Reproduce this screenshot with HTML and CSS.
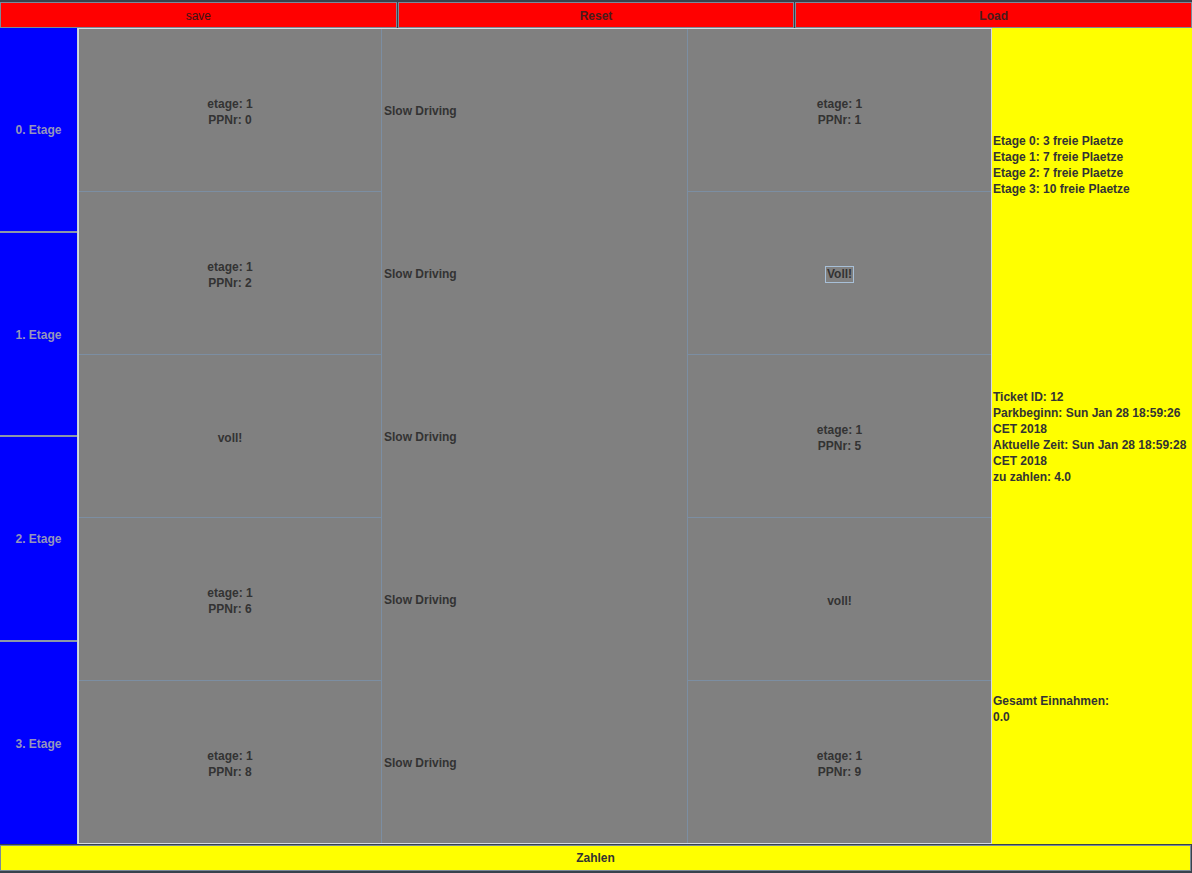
FILE: index.html
```html
<!DOCTYPE html>
<html>
<head>
<meta charset="utf-8">
<link rel="stylesheet" href="styles.css">
</head>
<body>
<div class="frame">
  <div class="topbar">
    <div class="tbtn light">save</div>
    <div class="tbtn">Reset</div>
    <div class="tbtn">Load</div>
  </div>
  <div class="main">
    <div class="floors">
      <div class="floor">0. Etage</div>
      <div class="floor">1. Etage</div>
      <div class="floor">2. Etage</div>
      <div class="floor">3. Etage</div>
    </div>
    <div class="lot">
      <div class="col col-left">
        <div class="cell"><span>etage: 1<br>PPNr: 0</span></div>
        <div class="cell"><span>etage: 1<br>PPNr: 2</span></div>
        <div class="cell"><span>voll!</span></div>
        <div class="cell"><span>etage: 1<br>PPNr: 6</span></div>
        <div class="cell"><span>etage: 1<br>PPNr: 8</span></div>
      </div>
      <div class="col col-mid">
        <div class="lane">Slow Driving</div>
        <div class="lane">Slow Driving</div>
        <div class="lane">Slow Driving</div>
        <div class="lane">Slow Driving</div>
        <div class="lane">Slow Driving</div>
      </div>
      <div class="col col-right">
        <div class="cell"><span>etage: 1<br>PPNr: 1</span></div>
        <div class="cell"><span class="voll">Voll!</span></div>
        <div class="cell"><span>etage: 1<br>PPNr: 5</span></div>
        <div class="cell"><span>voll!</span></div>
        <div class="cell"><span>etage: 1<br>PPNr: 9</span></div>
      </div>
    </div>
    <div class="info">
      <div class="info-sec">Etage 0: 3 freie Plaetze<br>Etage 1: 7 freie Plaetze<br>Etage 2: 7 freie Plaetze<br>Etage 3: 10 freie Plaetze</div>
      <div class="info-sec">Ticket ID: 12<br>Parkbeginn: Sun Jan 28 18:59:26<br>CET 2018<br>Aktuelle Zeit: Sun Jan 28 18:59:28<br>CET 2018<br>zu zahlen: 4.0</div>
      <div class="info-sec">Gesamt Einnahmen:<br>0.0</div>
    </div>
  </div>
  <div class="bottombar">
    <div class="zahlen">Zahlen</div>
  </div>
</div>
</body>
</html>
```

FILE: styles.css
```css
html, body {
  margin: 0;
  padding: 0;
}
body {
  background: #38424c;
  font-family: "Liberation Sans", Arial, sans-serif;
  font-size: 12px;
  font-weight: bold;
  color: #333333;
}
.frame {
  width: 1192px;
  height: 873px;
  padding-top: 2px;
  box-sizing: border-box;
  display: flex;
  flex-direction: column;
}
.topbar {
  display: flex;
  height: 26px;
  flex: none;
}
.tbtn {
  flex: 1;
  background: #ff0000;
  border: 1px solid #7a8a99;
  display: flex;
  align-items: center;
  justify-content: center;
  color: #4a1c1c;
  padding-top: 1px;
}
.tbtn + .tbtn {
  margin-left: 1px;
}
.tbtn.light {
  font-weight: normal;
  color: #3a1414;
}
.main {
  display: flex;
  height: 816px;
  flex: none;
}
.floors {
  width: 77px;
  display: flex;
  flex-direction: column;
  border-right: 1px solid #c8d0d8;
  background: #0000ff;
}
.floor {
  flex: 1;
  background: #0000ff;
  color: #9494bc;
  display: flex;
  align-items: center;
  justify-content: center;
  padding-top: 2px;
}
.floor + .floor {
  border-top: 2px solid #8c98a8;
}
.lot {
  width: 912px;
  border: 1px solid #d4dae0;
  background: #808080;
  display: flex;
}
.col {
  display: flex;
  flex-direction: column;
}
.col-left {
  width: 302px;
  flex: none;
}
.col-right {
  flex: 1;
}
.col-mid {
  width: 307px;
  flex: none;
  box-sizing: border-box;
  border-left: 1px solid #7c8ea2;
  border-right: 1px solid #7c8ea2;
}
.cell {
  flex: 1;
  display: flex;
  align-items: center;
  justify-content: center;
  text-align: center;
  line-height: 16px;
  padding-top: 3px;
}
.cell + .cell {
  border-top: 1px solid #7c8ea2;
}
.lane {
  flex: 1;
  display: flex;
  align-items: center;
  padding-left: 2px;
  padding-top: 2px;
}
.voll {
  border: 1px solid #a8c0d8;
  padding: 0 1px;
  line-height: 15px;
}
.info {
  flex: 1;
  background: #ffff00;
  display: flex;
  flex-direction: column;
  padding-left: 1px;
}
.info-sec {
  flex: 1;
  display: flex;
  align-items: center;
  line-height: 16px;
  padding-top: 1px;
}
.bottombar {
  height: 28px;
  flex: none;
}
.zahlen {
  height: 26px;
  box-sizing: border-box;
  margin-top: 1px;
  width: 1191px;
  background: #ffff00;
  border: 1px solid #7a8a99;
  display: flex;
  align-items: center;
  justify-content: center;
}
```
